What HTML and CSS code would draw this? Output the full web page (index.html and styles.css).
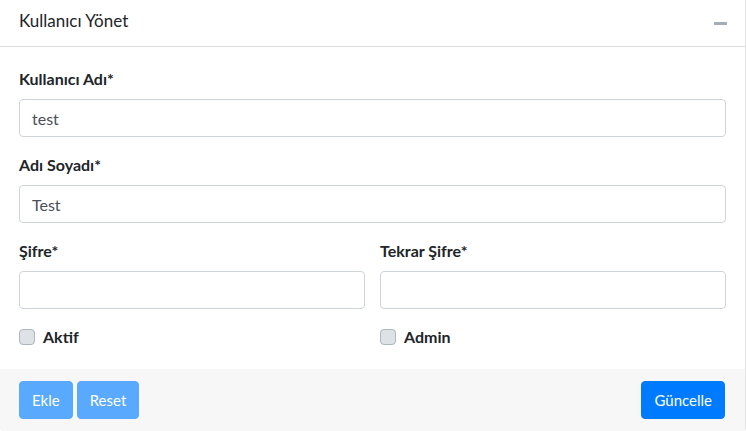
FILE: index.html
```html
<!DOCTYPE html>
<html lang="tr">
<head>
<meta charset="utf-8">
<title>Kullanıcı Yönet</title>
<link rel="stylesheet" href="styles.css">
</head>
<body>
<div class="card">
  <div class="card-header">
    <h3 class="card-title">Kullanıcı Yönet</h3>
    <button class="tool" type="button" aria-label="Daralt"><span class="minus"></span></button>
  </div>
  <div class="card-body">
    <div class="form-group">
      <label class="lbl">Kullanıcı Adı*</label>
      <input class="ctrl" type="text" value="test">
    </div>
    <div class="form-group">
      <label class="lbl">Adı Soyadı*</label>
      <input class="ctrl" type="text" value="Test">
    </div>
    <div class="row">
      <div class="form-group">
        <label class="lbl">Şifre*</label>
        <input class="ctrl" type="password" value="">
      </div>
      <div class="form-group">
        <label class="lbl">Tekrar Şifre*</label>
        <input class="ctrl" type="password" value="">
      </div>
    </div>
    <div class="row last">
      <label class="check"><span class="box"></span><span>Aktif</span></label>
      <label class="check"><span class="box"></span><span>Admin</span></label>
    </div>
  </div>
  <div class="card-footer">
    <div class="left">
      <button class="btn btn-disabled" type="button">Ekle</button>
      <button class="btn btn-disabled" type="button">Reset</button>
    </div>
    <button class="btn btn-primary" type="button">Güncelle</button>
  </div>
</div>
</body>
</html>
```

FILE: styles.css
```css
* { box-sizing: border-box; }
html, body { margin: 0; padding: 0; background: #ffffff; }
body {
  font-family: "Source Sans Pro", Lato, "Liberation Sans", sans-serif;
  font-size: 16px;
  line-height: 1.5;
  color: #212529;
}
.card {
  width: 746px;
  height: 431px;
  background: #fff;
  border-right: 1px solid #e3e3e3;
  border-bottom-left-radius: 3px;
  border-bottom-right-radius: 3px;
  overflow: hidden;
  display: flex;
  flex-direction: column;
}
.card-header {
  height: 47px;
  border-bottom: 1px solid #dcdcdc;
  padding: 10px 19px 0 19px;
  display: flex;
  align-items: flex-start;
  justify-content: space-between;
}
.card-title {
  margin: 0;
  font-size: 17px;
  font-weight: 400;
  line-height: 21px;
  color: #212529;
}
.tool {
  border: 0;
  background: transparent;
  padding: 0;
  margin: 12px -1px 0 0;
  width: 13px;
  height: 3px;
  display: flex;
}
.minus {
  display: block;
  width: 13px;
  height: 3px;
  background: #a5adb6;
}
.card-body {
  padding: 20px 19px 20px 19px;
  flex: 0 0 auto;
}
.form-group { margin-bottom: 16px; }
.lbl {
  display: block;
  font-weight: 700;
  margin-bottom: 8px;
  line-height: 24px;
}
.ctrl {
  display: block;
  width: 100%;
  height: 38px;
  padding: 6px 12px;
  font-family: inherit;
  font-size: 16px;
  color: #495057;
  background: #fff;
  border: 1px solid #ced4da;
  border-radius: 4px;
  outline: none;
}
.row {
  display: grid;
  grid-template-columns: 1fr 1fr;
  column-gap: 15px;
}
.row.last { height: 24px; }
.check {
  display: flex;
  align-items: center;
  gap: 8px;
  font-weight: 700;
  line-height: 24px;
}
.box {
  width: 16px;
  height: 16px;
  border: 1px solid #adb5bd;
  border-radius: 4px;
  background: #dee2e6;
}
.card-footer {
  flex: 1 1 auto;
  background: #f7f7f7;
  padding: 12px 20px 12px 19px;
  display: flex;
  justify-content: space-between;
  align-items: flex-start;
}
.left { display: flex; gap: 4px; }
.btn {
  height: 38px;
  padding: 6px 12px;
  font-family: inherit;
  font-size: 15px;
  line-height: 24px;
  color: #fff;
  border: 1px solid transparent;
  border-radius: 4px;
  cursor: pointer;
}
.btn-primary { background: #007bff; border-color: #007bff; }
.btn-disabled { background: #59a9fe; border-color: #59a9fe; }
```
